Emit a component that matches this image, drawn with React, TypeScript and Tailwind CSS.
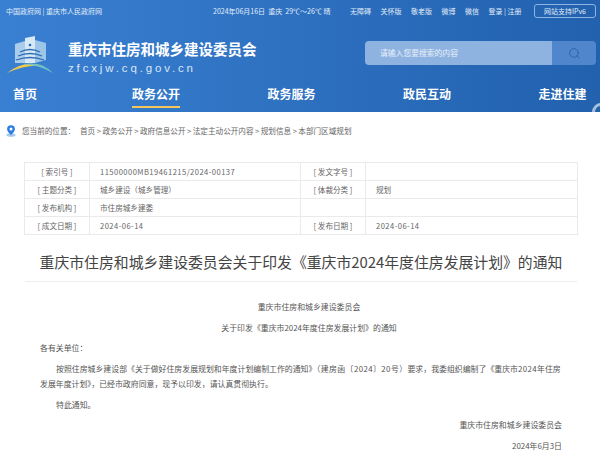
import React from 'react';
import { Search } from 'lucide-react';

const topLinks = ['无障碍', '关怀版', '敬老版', '微博', '微信'];
const navItems = [
  { label: '政务公开', active: true },
  { label: '政务服务' },
  { label: '政民互动' },
  { label: '走进住建' },
];
const crumbs = ['首页', '政务公开', '政府信息公开', '法定主动公开内容', '规划信息', '本部门区域规划'];
const metaRows = [
  ['[ 索引号 ]', '11500000MB19461215/2024-00137', '[ 发文字号 ]', ''],
  ['[ 主题分类 ]', '城乡建设（城乡管理）', '[ 体裁分类 ]', '规划'],
  ['[ 发布机构 ]', '市住房城乡建委', '', ''],
  ['[ 成文日期 ]', '2024-06-14', '[ 发布日期 ]', '2024-06-14'],
];

const Logo = () => (
  <svg width="48" height="38" viewBox="0 0 48 38" className="shrink-0">
    <path d="M9 8 L19 5 V27 H9Z" fill="#a9cdea" />
    <path d="M19 2 L29 0 V27 H19Z" fill="#d7e9f6" />
    <path d="M29 4 L40 7 V24 L29 27Z" fill="#9cc6e8" />
    <circle cx="24" cy="9" r="1.3" fill="#2b69b5" />
    <path d="M14 16 Q24 11 34 16 M12 20 Q24 15 36 20 M10 24 Q24 19 38 24" stroke="#2f6bb3" strokeWidth="1.3" fill="none" />
    <path d="M1 37 Q20 22 40 31 Q24 27 1 37Z" fill="#f2c84b" />
    <path d="M16 28 Q36 25 47 37 Q34 29 16 28Z" fill="#6fc3c9" />
  </svg>
);

const Pin = () => (
  <svg width="10" height="12" viewBox="0 0 10 12">
    <ellipse cx="5" cy="10" rx="4.6" ry="1.8" fill="#a9c8ee" />
    <path d="M5 0.3 A3.9 3.9 0 0 1 8.9 4.2 C8.9 6.5 6.2 8.7 5 10 C3.8 8.7 1.1 6.5 1.1 4.2 A3.9 3.9 0 0 1 5 0.3Z" fill="#2b7de0" />
    <circle cx="5" cy="4.1" r="1.5" fill="#fff" />
  </svg>
);

export default function App() {
  return (
    <div className="w-[600px] h-[455px] overflow-hidden bg-white font-['Noto_Sans_CJK_SC',sans-serif] text-[#555]">
      {/* Header */}
      <header className="relative overflow-hidden h-[112px] bg-gradient-to-r from-[#3a80d2] to-[#2161ae] text-white">
        <div className="h-[24px] pl-[6px] pr-[4px] pt-[4px] flex items-start text-[7px] leading-[14px] text-[#e2edf9]">
          <span className="w-[207px] shrink-0">中国政府网 | 重庆市人民政府网</span>
          <span className="w-[137px] shrink-0">2024年06月16日&nbsp; 重庆&nbsp; 29℃～26℃ 晴</span>
          <div className="flex gap-[9.5px]">
            {topLinks.map((t) => (
              <span key={t}>{t}</span>
            ))}
            <span>登录 | 注册</span>
          </div>
          <span className="ml-auto w-[62px] h-[14px] rounded-[3px] border border-[#8db4e2] text-center leading-[12px]">网站支持IPv6</span>
        </div>
        <div className="h-[56px] pl-[6px] pr-[4px] flex items-start">
          <div className="mt-[12px]">
            <Logo />
          </div>
          <div className="ml-[14px] mt-[13px] w-[297px] shrink-0">
            <div className="text-[14.5px] leading-[24px] font-bold whitespace-nowrap">重庆市住房和城乡建设委员会</div>
            <div className="text-[11.5px] leading-[14px] tracking-[2.85px] text-[#d8e6f6] font-['Liberation_Sans',sans-serif]">zfcxjw.cq.gov.cn</div>
          </div>
          <div className="mt-[17px] flex w-[231px] h-[24px] rounded-[4px] overflow-hidden">
            <div className="w-[187px] bg-[#8fb3e0] pl-[15px] text-[7.8px] leading-[24px] text-[#e8f0fa]">请输入您要搜索的内容</div>
            <div className="flex-1 bg-[#5087cc] flex items-center justify-center">
              <Search size={13} strokeWidth={1.6} className="text-[#2a60a8]" />
            </div>
          </div>
        </div>
        <nav className="flex pl-[13px] text-[12px] leading-[28px] font-bold whitespace-nowrap">
          <div className="w-[119px]">首页</div>
          <div className="flex gap-[87.5px]">
            {navItems.map((n) => (
              <div key={n.label} className={`w-[48px] h-[28px] ${n.active ? 'border-b-2 border-[#f2c65c]' : ''}`}>
                {n.label}
              </div>
            ))}
          </div>
        </nav>
        {/* arc peeking in at the corner of the header */}
        <div className="absolute left-[592px] top-[103px] w-[18px] h-[18px] rounded-full border-[3px] border-[#a5bfdc]" />
      </header>

      {/* Breadcrumb */}
      <div className="flex items-center h-[12px] mt-[13px] pl-[6px] text-[7.6px] leading-[12px] text-[#666]">
        <Pin />
        <span className="ml-[6px] w-[58px] shrink-0">您当前的位置：</span>
        <div className="flex gap-[1.5px] whitespace-nowrap">
          {crumbs.map((c, i) => (
            <React.Fragment key={c}>
              {i > 0 && <span>&gt;</span>}
              <span>{c}</span>
            </React.Fragment>
          ))}
        </div>
      </div>

      {/* Meta table */}
      <table className="ml-[24px] mt-[25px] w-[554px] table-fixed border-collapse text-[7.6px] text-[#666]">
        <colgroup>
          <col className="w-[65px]" />
          <col className="w-[211px]" />
          <col className="w-[65px]" />
          <col />
        </colgroup>
        <tbody>
          {metaRows.map((r) => (
            <tr key={r[0]} className="h-[18px]">
              <td className="border border-[#eaeaea] text-center p-0">{r[0]}</td>
              <td className={`border border-[#eaeaea] pl-[10px] p-0 ${/^\d/.test(r[1]) ? 'tracking-[0.45px]' : ''}`}>{r[1]}</td>
              <td className="border border-[#eaeaea] text-center p-0">{r[2]}</td>
              <td className={`border border-[#eaeaea] pl-[10px] p-0 ${/^\d/.test(r[3]) ? 'tracking-[0.45px]' : ''}`}>{r[3]}</td>
            </tr>
          ))}
        </tbody>
      </table>

      {/* Article */}
      <div className="mx-[25px] w-[552px]">
        <h1 className="mt-[16px] h-[31px] border-b border-[#eeeeee] text-center text-[14.85px] leading-[22px] font-normal text-[#444] whitespace-nowrap">
          重庆市住房和城乡建设委员会关于印发《重庆市2024年度住房发展计划》的通知
        </h1>
        <div className="px-[15px] pt-[17px] text-[7.9px] leading-[15px] text-[#555]">
          <p className="text-center indent-[16px]">重庆市住房和城乡建设委员会</p>
          <p className="text-center indent-[16px] mt-[5.7px]">关于印发《重庆市2024年度住房发展计划》的通知</p>
          <p className="mt-[5.7px]">各有关单位：</p>
          <p className="mt-[5.7px] indent-[16px]">
            按照住房城乡建设部《关于做好住房发展规划和年度计划编制工作的通知》<span className="tracking-[0.4px]">（建房函〔2024〕20号）</span>要求，我委组织编制了《重庆市<span className="tracking-[0.4px]">2024</span>年住房<br />发展年度计划》，已经市政府同意，现予以印发，请认真贯彻执行。
          </p>
          <p className="mt-[5.7px] indent-[16px]">特此通知。</p>
          <p className="mt-[5.7px] text-right">重庆市住房和城乡建设委员会</p>
          <p className="mt-[5.7px] text-right">2024年6月3日</p>
        </div>
      </div>
    </div>
  );
}
